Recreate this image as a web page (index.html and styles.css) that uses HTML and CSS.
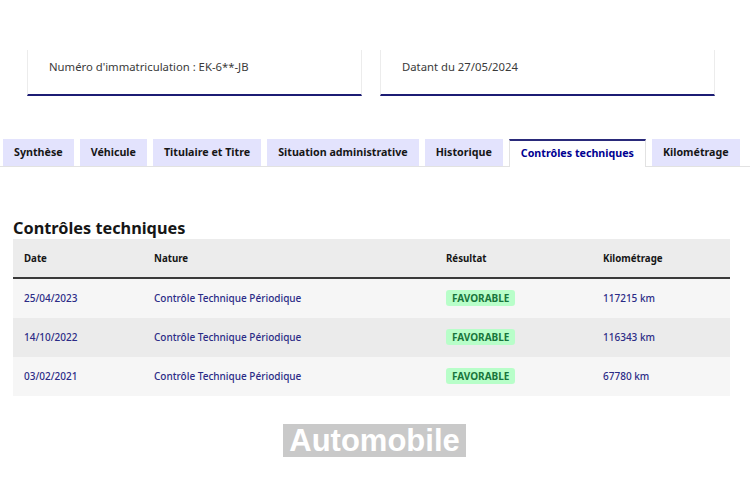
FILE: index.html
```html
<!DOCTYPE html>
<html lang="fr">
<head>
<meta charset="utf-8">
<title>Contrôles techniques</title>
<link rel="stylesheet" href="styles.css">
</head>
<body>
<div class="page">
  <div class="cards">
    <div class="card">Numéro d'immatriculation : EK-6**-JB</div>
    <div class="card">Datant du 27/05/2024</div>
  </div>

  <nav class="tabs">
    <span class="tab">Synthèse</span>
    <span class="tab">Véhicule</span>
    <span class="tab">Titulaire et Titre</span>
    <span class="tab">Situation administrative</span>
    <span class="tab">Historique</span>
    <span class="tab tab-active">Contrôles techniques</span>
    <span class="tab">Kilométrage</span>
  </nav>

  <h2 class="title">Contrôles techniques</h2>

  <div class="table">
    <div class="row row-head">
      <div class="cell">Date</div>
      <div class="cell">Nature</div>
      <div class="cell">Résultat</div>
      <div class="cell">Kilométrage</div>
    </div>
    <div class="row row-light">
      <div class="cell">25/04/2023</div>
      <div class="cell">Contrôle Technique Périodique</div>
      <div class="cell"><span class="badge">Favorable</span></div>
      <div class="cell">117215 km</div>
    </div>
    <div class="row row-dark">
      <div class="cell">14/10/2022</div>
      <div class="cell">Contrôle Technique Périodique</div>
      <div class="cell"><span class="badge">Favorable</span></div>
      <div class="cell">116343 km</div>
    </div>
    <div class="row row-light">
      <div class="cell">03/02/2021</div>
      <div class="cell">Contrôle Technique Périodique</div>
      <div class="cell"><span class="badge">Favorable</span></div>
      <div class="cell">67780 km</div>
    </div>
  </div>

  <div class="watermark">Automobile</div>
</div>
</body>
</html>
```

FILE: styles.css
```css
* { box-sizing: border-box; }

html, body {
  margin: 0;
  padding: 0;
  background: #ffffff;
}

body {
  font-family: "Noto Sans", "Open Sans", sans-serif;
  color: #161616;
}

.page {
  position: relative;
  width: 750px;
  height: 500px;
  overflow: hidden;
}

.cards {
  display: flex;
  gap: 18px;
  padding: 50px 0 0 27px;
}

.card {
  width: 335px;
  padding: 9px 21px 19px;
  font-size: 11.3px;
  line-height: 16px;
  color: #3a3a3a;
  border-left: 1px solid #ececec;
  border-right: 1px solid #ececec;
  border-bottom: 2px solid #1c1c74;
}

.tabs {
  display: flex;
  gap: 6px;
  margin-top: 43px;
  padding-left: 3px;
  border-bottom: 1px solid #e2e2e2;
  height: 28px;
}

.tab {
  height: 27px;
  line-height: 27px;
  padding: 0 11px;
  font-size: 10.7px;
  font-weight: 700;
  color: #161616;
  background: #e3e3fd;
  white-space: nowrap;
}

.tab-active {
  height: 28px;
  background: #ffffff;
  color: #000091;
  border-top: 2px solid #2a2a7a;
  border-left: 1px solid #e2e2e2;
  border-right: 1px solid #e2e2e2;
  line-height: 25px;
}

.title {
  margin: 50px 0 0 13px;
  font-size: 16.3px;
  line-height: 22px;
  font-weight: 700;
  color: #161616;
}

.table {
  margin: 0 20px 0 13px;
  width: 717px;
}

.row {
  display: grid;
  grid-template-columns: 130px 292px 157px 1fr;
  height: 39px;
  align-items: center;
  padding-bottom: 1px;
}

.cell {
  padding-left: 11px;
  font-size: 10px;
  font-weight: 500;
  color: #2b2b86;
}

.row-head {
  background: #ececec;
  border-bottom: 2px solid #3a3a3a;
  height: 40px;
  padding-bottom: 0;
}

.row-head .cell {
  color: #161616;
  font-weight: 700;
  font-size: 9.7px;
}

.row-light { background: #f6f6f6; }
.row-dark { background: #ebebeb; }

.badge {
  display: inline-block;
  padding: 0 6px;
  height: 16px;
  line-height: 16px;
  background: #b8fec9;
  color: #18753c;
  font-weight: 700;
  font-size: 10px;
  text-transform: uppercase;
  border-radius: 3px;
}

.watermark {
  position: absolute;
  left: 283px;
  top: 424px;
  width: 183px;
  height: 33px;
  line-height: 33px;
  text-align: center;
  background: #c9c9c9;
  color: #ffffff;
  font-family: "Liberation Sans", Arial, sans-serif;
  font-weight: 700;
  font-size: 31px;
}
```
